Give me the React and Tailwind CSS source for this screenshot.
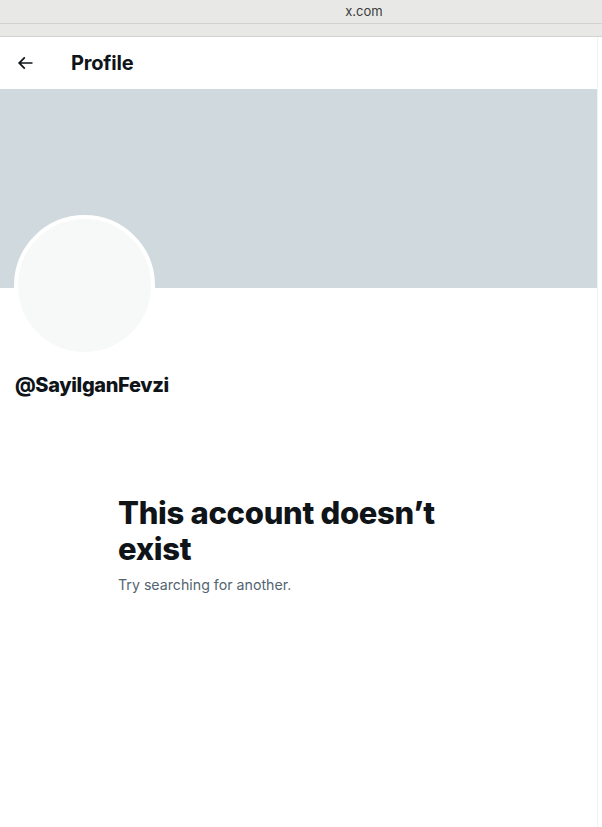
import React from "react";

export default function App() {
  const font = { fontFamily: "Inter, 'Liberation Sans', sans-serif" };
  return (
    <div className="w-[602px] h-[827px] bg-white overflow-hidden flex flex-col" style={font}>
      <div className="h-[23px] bg-[#e8e8e6] flex items-center justify-center pl-[126px] text-[13px] text-[#3c3c3c]">
        x.com
      </div>
      <div className="h-px bg-[#d2d2d0]" />
      <div className="h-[12px] bg-[#e8e8e6]" />
      <div className="h-px bg-[#d2d2d0]" />
      <div className="flex flex-1">
        <div className="w-[597px] flex flex-col">
          <div className="h-[52px] flex items-center">
            <div className="w-[71px] pl-[15px] flex items-center">
              <svg width="20" height="20" viewBox="0 0 24 24" fill="#0f1419">
                <path d="M7.414 13l5.043 5.04-1.414 1.42L3.586 12l7.457-7.46 1.414 1.42L7.414 11H21v2H7.414z" />
              </svg>
            </div>
            <div className="text-[20px] font-bold text-[#0f1419] tracking-[-0.2px]">Profile</div>
          </div>
          <div className="h-[199px] bg-[#cfd9de]" />
          <div className="relative h-[70px]">
            <div className="absolute left-[14px] top-[-73px] w-[141px] h-[141px] rounded-full bg-[#f7f9f9] border-4 border-white" />
          </div>
          <div className="pl-[15px] pt-[15px] text-[20px] font-extrabold text-[#0f1419] leading-[24px] tracking-[-0.35px]">
            @SayilganFevzi
          </div>
          <div className="pl-[118px] pt-[98px] pr-[120px]">
            <div className="text-[31px] font-extrabold text-[#0f1419] leading-[36px] tracking-[-0.3px]">
              This account doesn’t exist
            </div>
            <div className="mt-[8px] text-[14.2px] text-[#536471] leading-[20px]">Try searching for another.</div>
          </div>
        </div>
        <div className="w-px bg-[#eff3f4]" />
        <div className="flex-1 bg-white" />
      </div>
    </div>
  );
}
